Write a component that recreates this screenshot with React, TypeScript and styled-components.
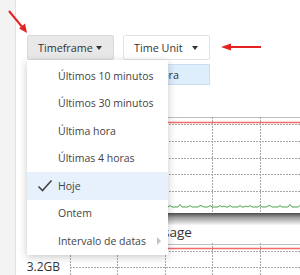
import styled, { createGlobalStyle } from "styled-components";

const GlobalStyle = createGlobalStyle`
  html, body {
    margin: 0;
    padding: 0;
    background: #fff;
  }
  body {
    font-family: "Open Sans", "Noto Sans", "Liberation Sans", sans-serif;
  }
`;

const Page = styled.div`
  position: relative;
  display: flex;
  width: 300px;
  height: 275px;
  overflow: hidden;
`;

const Sidebar = styled.div`
  width: 15px;
  flex-shrink: 0;
  background: #f3f3f3;
  border-right: 1px solid #e2e2e2;
`;

const Main = styled.div`
  position: relative;
  flex: 1;
  display: flex;
  flex-direction: column;
  padding: 35px 0 0 11px;
`;

const Toolbar = styled.div`
  display: flex;
  align-items: flex-start;
  gap: 9px;
`;

const UnitColumn = styled.div`
  display: flex;
  flex-direction: column;
  gap: 4px;
`;

const DropButton = styled.div<{ $active?: boolean }>`
  box-sizing: border-box;
  width: 87px;
  height: 25px;
  display: flex;
  align-items: center;
  justify-content: space-between;
  padding: 0 11px 0 10px;
  border: 1px solid ${(p) => (p.$active ? "#dadada" : "#e3e3e3")};
  background: ${(p) => (p.$active ? "#e8e8e8" : "#fff")};
  border-radius: 2px;
  font-size: 10.8px;
  color: #333;
  white-space: nowrap;
`;

const Caret = styled.span`
  width: 0;
  height: 0;
  border-left: 3.5px solid transparent;
  border-right: 3.5px solid transparent;
  border-top: 4px solid #333;
`;

const Chip = styled.div`
  box-sizing: border-box;
  width: 87px;
  height: 21px;
  display: flex;
  align-items: center;
  justify-content: center;
  background: #dfeefc;
  border: 1px solid #c9def2;
  font-size: 10.8px;
  color: #333;
`;

const Charts = styled.div`
  margin-top: 32px;
  display: flex;
  flex-direction: column;
`;

const ChartRow = styled.div`
  display: flex;
`;

const AxisLabels = styled.div<{ $h: number }>`
  position: relative;
  width: 43px;
  height: ${(p) => p.$h}px;
  flex-shrink: 0;
`;

const AxisLabel = styled.div<{ $y: number }>`
  position: absolute;
  right: 10px;
  top: ${(p) => p.$y - 9}px;
  font-size: 12px;
  line-height: 18px;
  color: #333;
`;

const Shade = styled.div`
  height: 12px;
  margin-left: 43px;
  background: linear-gradient(#4a4a4a, #9a9a9a 35%, #f6f6f6);
`;

const ChartTitle = styled.div`
  height: 18px;
  padding-left: 70px;
  font-size: 13.5px;
  line-height: 14px;
  color: #333;
`;

const Menu = styled.div`
  position: absolute;
  left: 11px;
  top: 60px;
  width: 141px;
  padding: 2px 0 0;
  background: #fff;
  box-shadow: 0 2px 8px rgba(0, 0, 0, 0.22);
  z-index: 2;
`;

const Item = styled.div<{ $selected?: boolean }>`
  position: relative;
  height: 27.5px;
  display: flex;
  align-items: center;
  padding-left: 31px;
  font-size: 10.5px;
  color: #444;
  white-space: nowrap;
  background: ${(p) => (p.$selected ? "#e6f1fc" : "transparent")};
`;

const Check = styled.svg`
  position: absolute;
  left: 10px;
  top: 7px;
`;

const SubCaret = styled.span`
  position: absolute;
  right: 7px;
  top: 10px;
  width: 0;
  height: 0;
  border-top: 4px solid transparent;
  border-bottom: 4px solid transparent;
  border-left: 4px solid #c4c4c4;
`;

const Overlay = styled.svg`
  position: absolute;
  left: 0;
  top: 0;
  pointer-events: none;
  z-index: 3;
`;

const vx = [0.5, 47.5, 95.5, 142.5, 190.5];

const Grid = ({ h, lines }: { h: number; lines: number[] }) => (
  <>
    {lines.map((y) => (
      <line key={"h" + y} x1={0} x2={230} y1={y + 0.5} y2={y + 0.5} stroke="#a8a8a8" strokeDasharray="2 1" />
    ))}
    {vx.map((x) => (
      <line key={"v" + x} x1={x} x2={x} y1={0} y2={h} stroke="#a8a8a8" strokeDasharray="2 1" />
    ))}
  </>
);

const greenPath = (() => {
  let d = "M0 90";
  for (let x = 2; x <= 230; x += 2) {
    const y = 90 - ((x * 7) % 5 === 0 ? 1.5 : 0) - ((x * 13) % 11 === 0 ? 1 : 0);
    d += ` L${x} ${y}`;
  }
  return d;
})();

const items = [
  "Últimos 10 minutos",
  "Últimos 30 minutos",
  "Última hora",
  "Últimas 4 horas",
  "Hoje",
  "Ontem",
  "Intervalo de datas",
];

export default function App() {
  return (
    <Page>
      <GlobalStyle />
      <Sidebar />
      <Main>
        <Toolbar>
          <DropButton $active>
            Timeframe <Caret />
          </DropButton>
          <UnitColumn>
            <DropButton>
              Time Unit <Caret />
            </DropButton>
            <Chip>Hora</Chip>
          </UnitColumn>
        </Toolbar>

        <Charts>
          <ChartRow>
            <AxisLabels $h={96}>
              <AxisLabel $y={7}>8GB</AxisLabel>
              <AxisLabel $y={41}>6GB</AxisLabel>
              <AxisLabel $y={74}>4GB</AxisLabel>
            </AxisLabels>
            <svg width={230} height={96}>
              <line x1={0} x2={230} y1={0.5} y2={0.5} stroke="#bdbdbd" />
              <Grid h={96} lines={[7, 24, 41, 57, 74]} />
              <line x1={0} x2={230} y1={5.5} y2={5.5} stroke="#f36a6a" strokeWidth={1.5} />
              <path d={greenPath} fill="none" stroke="#4aa64a" strokeWidth={1} />
            </svg>
          </ChartRow>
          <Shade />
          <ChartTitle>Memory Usage</ChartTitle>
          <ChartRow>
            <AxisLabels $h={40}>
              <AxisLabel $y={8}>4GB</AxisLabel>
              <AxisLabel $y={24}>3.2GB</AxisLabel>
            </AxisLabels>
            <svg width={230} height={40}>
              <line x1={0} x2={230} y1={1.5} y2={1.5} stroke="#bdbdbd" />
              <Grid h={40} lines={[8, 24]} />
              <line x1={0} x2={230} y1={5.5} y2={5.5} stroke="#f36a6a" strokeWidth={1.5} />
            </svg>
          </ChartRow>
        </Charts>

        <Menu>
          {items.map((label) => (
            <Item key={label} $selected={label === "Hoje"}>
              {label === "Hoje" && (
                <Check width={16} height={14} viewBox="0 0 16 14">
                  <path d="M1.5 7.5 L5.5 11.5 L14.5 1.5" fill="none" stroke="#444" strokeWidth={1.6} />
                </Check>
              )}
              {label}
              {label === "Intervalo de datas" && <SubCaret />}
            </Item>
          ))}
        </Menu>
      </Main>

      <Overlay width={300} height={275}>
        <line x1={9} y1={11} x2={23} y2={28} stroke="#e42222" strokeWidth={2} />
        <polygon points="27,33 19,28.5 25,23.5" fill="#e42222" />
        <line x1={261} y1={47} x2={229} y2={47} stroke="#e42222" strokeWidth={2} />
        <polygon points="221,47 231,43.5 231,50.5" fill="#e42222" />
      </Overlay>
    </Page>
  );
}
